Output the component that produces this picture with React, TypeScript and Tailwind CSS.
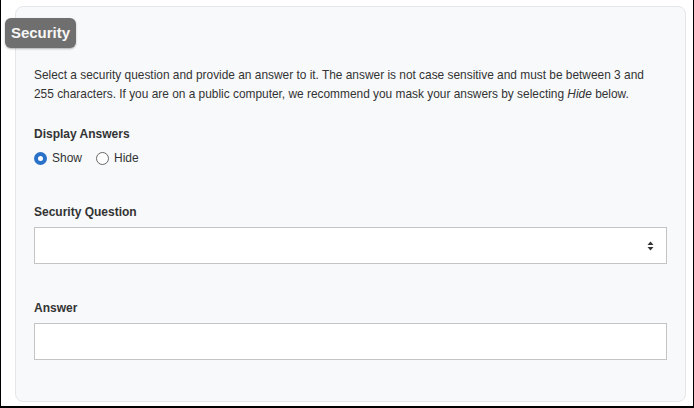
export default function App() {
  return (
    <div
      className="relative w-[694px] h-[408px] bg-white border-l border-r border-b-2 border-black overflow-hidden"
      style={{ fontFamily: '"Liberation Sans", Arial, sans-serif' }}
    >
      {/* Section badge */}
      <div className="absolute left-[4px] top-[18px] z-10 w-[71px] h-[30px] rounded-md bg-[#6f6f6f] text-[#f7f7f7] text-[15px] font-bold flex items-center justify-center shadow-[0_1px_2px_rgba(0,0,0,0.3)]">
        Security
      </div>

      <div className="ml-[14px] mt-[6px] w-[671px] h-[396px] rounded-lg border border-[#e4e6ea] bg-[#f8f9fb] pl-[18px] pr-[18px] pt-[59px] text-[#333333]">
        <p className="text-[11.9px] leading-[19px] whitespace-nowrap">
          Select a security question and provide an answer to it. The answer is not case sensitive and must be between 3 and
          <br />
          255 characters. If you are on a public computer, we recommend you mask your answers by selecting <em>Hide</em> below.
        </p>

        <div className="mt-[21px] text-[12px] font-bold leading-[18px]">Display Answers</div>
        <div className="mt-[6px] flex items-center text-[12px] leading-[18px]">
          <span className="w-[13px] h-[13px] rounded-full bg-[#2a71c8] flex items-center justify-center">
            <span className="w-[5px] h-[5px] rounded-full bg-white" />
          </span>
          <span className="ml-[5px]">Show</span>
          <span className="ml-[14px] w-[13px] h-[13px] rounded-full border border-[#666] bg-white" />
          <span className="ml-[5px]">Hide</span>
        </div>

        <div className="mt-[36px] text-[12px] font-bold leading-[18px]">Security Question</div>
        <div className="mt-[6px] h-[37px] border border-[#c4c4c4] bg-white flex items-center justify-end pr-[12px]">
          <svg width="7" height="10" viewBox="0 0 7 10">
            <path d="M3.5 0.5 L6.5 4 H0.5 Z" fill="#333" />
            <path d="M3.5 9.5 L6.5 6 H0.5 Z" fill="#333" />
          </svg>
        </div>

        <div className="mt-[35px] text-[12px] font-bold leading-[18px]">Answer</div>
        <div className="mt-[6px] h-[37px] border border-[#c4c4c4] bg-white" />
      </div>
    </div>
  );
}
